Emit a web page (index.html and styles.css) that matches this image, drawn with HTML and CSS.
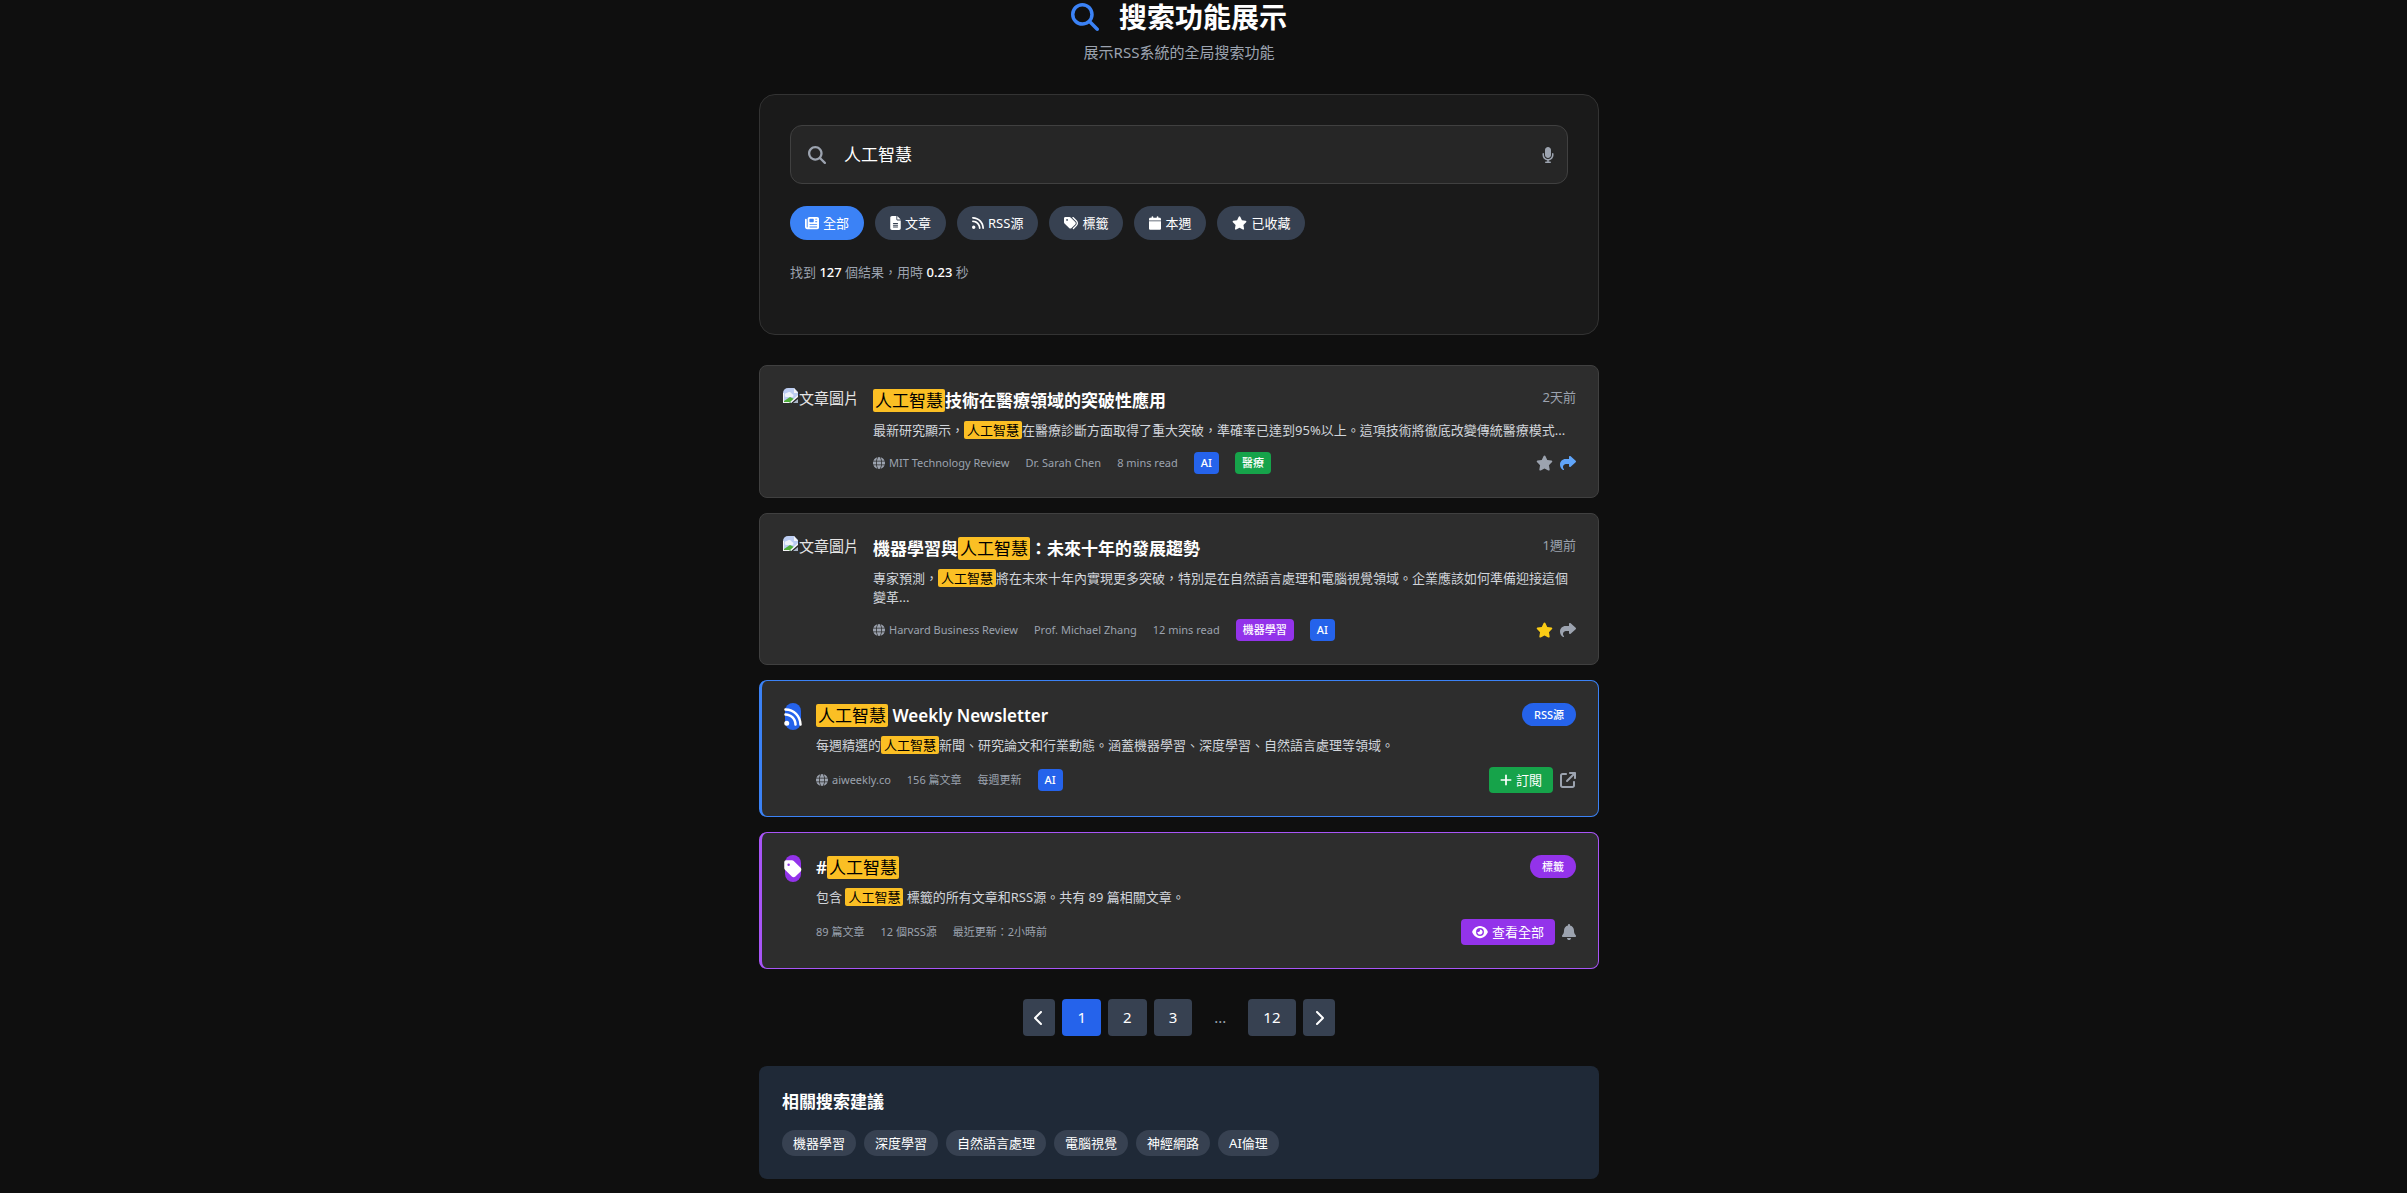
FILE: index.html
```html
<!DOCTYPE html>
<html lang="zh-Hant">
<head>
<meta charset="utf-8">
<meta name="viewport" content="width=device-width, initial-scale=1">
<title>搜索功能展示</title>
<link rel="stylesheet" href="styles.css">
</head>
<body>
<svg class="sprite" aria-hidden="true">
  <symbol id="i-search" viewBox="0 0 512 512"><path d="M416 208c0 45.900-14.900 88.300-40 122.700L502.600 457.400c12.500 12.500 12.500 32.800 0 45.300s-32.800 12.500-45.300 0L330.700 376c-34.400 25.200-76.800 40-122.700 40C93.100 416 0 322.900 0 208S93.100 0 208 0S416 93.100 416 208zM208 352a144 144 0 1 0 0-288 144 144 0 1 0 0 288z"/></symbol>
  <symbol id="i-mic" viewBox="0 0 384 512"><path d="M192 0C139 0 96 43 96 96V256c0 53 43 96 96 96s96-43 96-96V96c0-53-43-96-96-96zM64 216c0-13.300-10.700-24-24-24s-24 10.700-24 24v40c0 89.100 66.200 162.700 152 174.400V464H120c-13.300 0-24 10.700-24 24s10.700 24 24 24h72 72c13.300 0 24-10.700 24-24s-10.700-24-24-24H216V430.400c85.800-11.700 152-85.300 152-174.400V216c0-13.300-10.700-24-24-24s-24 10.700-24 24v40c0 70.700-57.300 128-128 128s-128-57.300-128-128V216z"/></symbol>
  <symbol id="i-news" viewBox="0 0 512 512"><path d="M96 96c0-35.300 28.700-64 64-64H448c35.300 0 64 28.700 64 64V416c0 35.300-28.700 64-64 64H80c-44.200 0-80-35.800-80-80V128c0-17.700 14.300-32 32-32s32 14.300 32 32V400c0 8.800 7.200 16 16 16s16-7.200 16-16V96zm64 24v80c0 13.300 10.700 24 24 24H296c13.300 0 24-10.700 24-24V120c0-13.300-10.700-24-24-24H184c-13.300 0-24 10.700-24 24zm208-8c0 8.800 7.200 16 16 16h48c8.800 0 16-7.200 16-16s-7.200-16-16-16H384c-8.800 0-16 7.200-16 16zm0 96c0 8.800 7.200 16 16 16h48c8.800 0 16-7.200 16-16s-7.200-16-16-16H384c-8.800 0-16 7.200-16 16zM160 304c0 8.800 7.200 16 16 16H432c8.800 0 16-7.200 16-16s-7.200-16-16-16H176c-8.800 0-16 7.200-16 16zm0 96c0 8.800 7.200 16 16 16H432c8.800 0 16-7.200 16-16s-7.200-16-16-16H176c-8.800 0-16 7.200-16 16z"/></symbol>
  <symbol id="i-file" viewBox="0 0 384 512"><path d="M64 0C28.700 0 0 28.700 0 64V448c0 35.300 28.700 64 64 64H320c35.300 0 64-28.700 64-64V160H256c-17.700 0-32-14.300-32-32V0H64zM256 0V128H384L256 0zM112 256H272c8.800 0 16 7.200 16 16s-7.200 16-16 16H112c-8.800 0-16-7.200-16-16s7.200-16 16-16zm0 64H272c8.800 0 16 7.200 16 16s-7.200 16-16 16H112c-8.800 0-16-7.200-16-16s7.200-16 16-16zm0 64H272c8.800 0 16 7.200 16 16s-7.200 16-16 16H112c-8.800 0-16-7.200-16-16s7.200-16 16-16z"/></symbol>
  <symbol id="i-rss" viewBox="0 0 448 512"><path d="M0 64C0 46.300 14.300 32 32 32c229.800 0 416 186.200 416 416c0 17.700-14.300 32-32 32s-32-14.300-32-32C384 253.600 226.400 96 32 96C14.300 96 0 81.700 0 64zM0 416a64 64 0 1 1 128 0A64 64 0 1 1 0 416zM32 160c159.100 0 288 128.900 288 288c0 17.700-14.300 32-32 32s-32-14.300-32-32c0-123.700-100.300-224-224-224c-17.700 0-32-14.300-32-32s14.300-32 32-32z"/></symbol>
  <symbol id="i-tags" viewBox="0 0 512 512"><path d="M345 39.100L472.800 168.400c52.400 53 52.400 138.200 0 191.200L360.800 472.900c-9.300 9.400-24.500 9.500-33.900 .2s-9.500-24.500-.2-33.900L438.600 325.900c33.900-34.300 33.900-89.400 0-123.700L310.900 72.900c-9.300-9.400-9.200-24.600 .2-33.900s24.600-9.200 33.900 .2zM0 229.500V80C0 53.500 21.500 32 48 32H197.500c17 0 33.300 6.700 45.300 18.700l168 168c25 25 25 65.500 0 90.500L277.300 442.700c-25 25-65.500 25-90.500 0l-168-168C6.700 262.700 0 246.500 0 229.500zM144 144a32 32 0 1 0-64 0 32 32 0 1 0 64 0z"/></symbol>
  <symbol id="i-tag" viewBox="0 0 448 512"><path d="M0 80V229.500c0 17 6.700 33.300 18.700 45.300l176 176c25 25 65.500 25 90.500 0L418.700 317.300c25-25 25-65.500 0-90.500l-176-176c-12-12-28.300-18.700-45.300-18.700H48C21.500 32 0 53.500 0 80zm112 32a32 32 0 1 1 0 64 32 32 0 1 1 0-64z"/></symbol>
  <symbol id="i-cal" viewBox="0 0 448 512"><path d="M96 32V64H48C21.500 64 0 85.500 0 112v48H448V112c0-26.500-21.500-48-48-48H352V32c0-17.700-14.300-32-32-32s-32 14.300-32 32V64H160V32c0-17.700-14.300-32-32-32S96 14.300 96 32zM448 192H0V464c0 26.500 21.500 48 48 48H400c26.500 0 48-21.500 48-48V192z"/></symbol>
  <symbol id="i-star" viewBox="0 0 576 512"><path d="M316.900 18C311.600 7 300.400 0 288.100 0s-23.400 7-28.800 18L195 150.300 51.400 171.500c-12 1.800-22 10.200-25.700 21.700s-.7 24.200 7.900 32.700L137.800 329 113.200 474.700c-2 12 3 24.200 12.900 31.300s23 8 33.800 2.300l128.300-68.500 128.300 68.500c10.800 5.700 23.900 4.900 33.800-2.300s14.900-19.300 12.900-31.300L438.500 329 542.700 225.900c8.600-8.500 11.700-21.200 7.900-32.700s-13.700-19.900-25.700-21.700L381.200 150.300 316.900 18z"/></symbol>
  <symbol id="i-share" viewBox="0 0 512 512"><path d="M307 34.800c-11.500 5.100-19 16.600-19 29.200v64H176C78.800 128 0 206.800 0 304C0 417.300 81.500 467.900 100.200 478.100c2.500 1.400 5.300 1.900 8.100 1.900c10.900 0 19.700-8.900 19.700-19.700c0-7.500-4.300-14.400-9.800-19.500C108.800 431.900 96 414.400 96 384c0-53 43-96 96-96h96v64c0 12.600 7.400 24.100 19 29.200s25 3 34.400-5.400l160-144c6.700-6.100 10.600-14.700 10.600-23.800s-3.800-17.700-10.600-23.800l-160-144c-9.400-8.500-22.900-10.600-34.400-5.400z"/></symbol>
  <symbol id="i-globe" viewBox="0 0 512 512"><path d="M352 256c0 22.200-1.200 43.600-3.300 64H163.300c-2.200-20.400-3.300-41.800-3.300-64s1.200-43.600 3.300-64H348.700c2.200 20.400 3.300 41.800 3.300 64zm28.800-64H503.900c5.300 20.500 8.100 41.900 8.100 64s-2.800 43.500-8.100 64H380.800c2.100-20.600 3.200-42 3.200-64s-1.100-43.400-3.200-64zm112.600-32H376.700c-10-63.900-29.800-117.400-55.300-151.600c78.300 20.700 142 77.500 171.900 151.600zm-149.100 0H167.700c6.100-36.400 15.500-68.600 27-94.700c10.500-23.600 22.200-40.700 33.500-51.500C239.400 3.200 248.700 0 256 0s16.600 3.200 27.800 13.800c11.300 10.800 23 27.900 33.500 51.500c11.600 26 20.900 58.200 27 94.700zm-209 0H18.600C48.600 85.900 112.200 29.100 190.600 8.400C165.100 42.600 145.300 96.100 135.300 160zM8.100 192H131.200c-2.100 20.600-3.200 42-3.200 64s1.100 43.400 3.200 64H8.100C2.800 299.500 0 278.100 0 256s2.800-43.500 8.100-64zM194.700 446.600c-11.600-26-20.900-58.200-27-94.600H344.300c-6.100 36.400-15.500 68.600-27 94.600c-10.500 23.600-22.200 40.700-33.500 51.500C272.600 508.800 263.300 512 256 512s-16.600-3.200-27.800-13.800c-11.300-10.800-23-27.900-33.500-51.500zM135.300 352c10 63.900 29.800 117.400 55.300 151.600C112.200 482.900 48.600 426.100 18.600 352H135.300zm358.100 0c-30 74.100-93.600 130.900-171.900 151.600c25.500-34.200 45.200-87.700 55.300-151.600H493.400z"/></symbol>
  <symbol id="i-plus" viewBox="0 0 448 512"><path d="M256 80c0-17.700-14.300-32-32-32s-32 14.300-32 32V224H48c-17.700 0-32 14.300-32 32s14.300 32 32 32H192V432c0 17.700 14.300 32 32 32s32-14.300 32-32V288H400c17.700 0 32-14.300 32-32s-14.300-32-32-32H256V80z"/></symbol>
  <symbol id="i-ext" viewBox="0 0 512 512"><path d="M320 0c-17.700 0-32 14.300-32 32s14.300 32 32 32h82.700L201.400 265.400c-12.500 12.500-12.500 32.800 0 45.300s32.800 12.500 45.300 0L448 109.300V192c0 17.700 14.300 32 32 32s32-14.300 32-32V32c0-17.700-14.300-32-32-32H320zM80 32C35.800 32 0 67.800 0 112V432c0 44.200 35.800 80 80 80H400c44.200 0 80-35.800 80-80V320c0-17.700-14.300-32-32-32s-32 14.300-32 32V432c0 8.800-7.200 16-16 16H80c-8.800 0-16-7.200-16-16V112c0-8.800 7.200-16 16-16H192c17.700 0 32-14.300 32-32s-14.300-32-32-32H80z"/></symbol>
  <symbol id="i-eye" viewBox="0 0 576 512"><path d="M288 32c-80.800 0-145.500 36.800-192.600 80.600C48.600 156 17.300 208 2.500 243.700c-3.300 7.900-3.300 16.700 0 24.600C17.300 304 48.600 356 95.400 399.400C142.500 443.200 207.200 480 288 480s145.500-36.800 192.600-80.600c46.800-43.500 78.100-95.400 93-131.100c3.300-7.900 3.300-16.700 0-24.600c-14.900-35.700-46.200-87.700-93-131.100C433.500 68.800 368.800 32 288 32zM144 256a144 144 0 1 1 288 0 144 144 0 1 1-288 0zm144-64c0 35.300-28.700 64-64 64c-7.100 0-13.900-1.200-20.300-3.300c-5.500-1.800-11.900 1.600-11.700 7.400c.3 6.900 1.300 13.800 3.200 20.700c13.700 51.200 66.400 81.600 117.600 67.900s81.600-66.400 67.900-117.600c-11.100-41.500-47.800-69.400-88.600-71.100c-5.800-.2-9.200 6.100-7.400 11.700c2.100 6.400 3.300 13.200 3.300 20.300z"/></symbol>
  <symbol id="i-bell" viewBox="0 0 448 512"><path d="M224 0c-17.700 0-32 14.300-32 32V51.200C119 66 64 130.600 64 208v18.800c0 47-17.300 92.400-48.500 127.600l-7.400 8.300c-8.400 9.400-10.400 22.900-5.300 34.400S19.400 416 32 416H416c12.600 0 24-7.400 29.200-18.900s3.100-25-5.300-34.400l-7.400-8.300C401.300 319.200 384 273.900 384 226.800V208c0-77.400-55-142-128-156.800V32c0-17.700-14.300-32-32-32zm45.300 493.300c12-12 18.700-28.300 18.700-45.300H224 160c0 17 6.700 33.300 18.700 45.300s28.300 18.700 45.300 18.700s33.300-6.700 45.300-18.700z"/></symbol>
  <symbol id="i-left" viewBox="0 0 320 512"><path d="M9.400 233.400c-12.500 12.500-12.500 32.800 0 45.300l192 192c12.500 12.500 32.800 12.500 45.300 0s12.500-32.800 0-45.300L77.300 256 246.600 86.600c12.500-12.500 12.500-32.800 0-45.300s-32.800-12.500-45.300 0l-192 192z"/></symbol>
  <symbol id="i-right" viewBox="0 0 320 512"><path d="M310.600 233.400c12.500 12.500 12.500 32.800 0 45.300l-192 192c-12.500 12.500-32.800 12.500-45.300 0s-12.500-32.800 0-45.300L242.700 256 73.400 86.600c-12.500-12.500-12.500-32.800 0-45.300s32.800-12.500 45.300 0l192 192z"/></symbol>
  <symbol id="i-broken" viewBox="0 0 16 16">
    <path fill="#bccdf2" d="M0 15V5a5 5 0 0 1 5-5h6l4 4v4L8 15z"/>
    <path fill="#eef2fb" d="M2 8a2 2 0 0 1 2-3a3 3 0 0 1 5 1a1 1 0 0 1 0 3H3a1 1 0 0 1-1-1z"/>
    <path fill="#4fae3a" d="M1 15v-2l6-4 4 2-4 4z"/>
    <path fill="#f4f5f7" d="M11 0l4 5h-4zM0 15h8v-1H1V5H0zM15 7v2l-7 6H6z"/>
    <path fill="#a9b6c9" d="M10 15l5-4v4z"/>
  </symbol>
</svg>

<div class="page">
  <header class="hero">
    <h1><svg class="hero-icon"><use href="#i-search"/></svg>搜索功能展示</h1>
    <p>展示RSS系統的全局搜索功能</p>
  </header>

  <section class="search-panel">
    <div class="search-box">
      <label for="q" aria-label="搜索"><svg class="ico-search"><use href="#i-search"/></svg></label>
      <input id="q" type="text" value="人工智慧">
      <button type="button" class="icon-btn" aria-label="語音"><svg class="w12"><use href="#i-mic"/></svg></button>
    </div>
    <div class="filters">
      <button type="button" class="filter active"><svg class="w14"><use href="#i-news"/></svg>全部</button>
      <button type="button" class="filter"><svg class="w11"><use href="#i-file"/></svg>文章</button>
      <button type="button" class="filter"><svg class="w12"><use href="#i-rss"/></svg>RSS源</button>
      <button type="button" class="filter"><svg class="w14"><use href="#i-tags"/></svg>標籤</button>
      <button type="button" class="filter"><svg class="w12"><use href="#i-cal"/></svg>本週</button>
      <button type="button" class="filter"><svg class="w15"><use href="#i-star"/></svg>已收藏</button>
    </div>
    <p class="stats">找到 <strong>127</strong> 個結果，用時 <strong>0.23</strong> 秒</p>
  </section>

  <main class="results">
    <article class="card">
      <div class="thumb"><svg><use href="#i-broken"/></svg><span>文章圖片</span></div>
      <div class="body">
        <div class="head"><h2><mark>人工智慧</mark>技術在醫療領域的突破性應用</h2><time>2天前</time></div>
        <p class="excerpt">最新研究顯示，<mark>人工智慧</mark>在醫療診斷方面取得了重大突破，準確率已達到95%以上。這項技術將徹底改變傳統醫療模式...</p>
        <div class="foot">
          <div class="meta"><span class="source"><svg><use href="#i-globe"/></svg>MIT Technology Review</span><span>Dr. Sarah Chen</span><span>8 mins read</span><span class="tag blue">AI</span><span class="tag green">醫療</span></div>
          <div class="actions"><button type="button" class="icon-btn" aria-label="收藏"><svg class="w17"><use href="#i-star"/></svg></button><button type="button" class="icon-btn sky" aria-label="分享"><svg class="w16"><use href="#i-share"/></svg></button></div>
        </div>
      </div>
    </article>

    <article class="card">
      <div class="thumb"><svg><use href="#i-broken"/></svg><span>文章圖片</span></div>
      <div class="body">
        <div class="head"><h2>機器學習與<mark>人工智慧</mark>：未來十年的發展趨勢</h2><time>1週前</time></div>
        <p class="excerpt">專家預測，<mark>人工智慧</mark>將在未來十年內實現更多突破，特別是在自然語言處理和電腦視覺領域。企業應該如何準備迎接這個變革...</p>
        <div class="foot">
          <div class="meta"><span class="source"><svg><use href="#i-globe"/></svg>Harvard Business Review</span><span>Prof. Michael Zhang</span><span>12 mins read</span><span class="tag purple">機器學習</span><span class="tag blue">AI</span></div>
          <div class="actions"><button type="button" class="icon-btn gold" aria-label="收藏"><svg class="w17"><use href="#i-star"/></svg></button><button type="button" class="icon-btn" aria-label="分享"><svg class="w16"><use href="#i-share"/></svg></button></div>
        </div>
      </div>
    </article>

    <article class="card feed">
      <div class="avatar blue"><svg><use href="#i-rss"/></svg></div>
      <div class="body">
        <div class="head"><h2><mark>人工智慧</mark> Weekly Newsletter</h2><span class="badge blue">RSS源</span></div>
        <p class="excerpt">每週精選的<mark>人工智慧</mark>新聞、研究論文和行業動態。涵蓋機器學習、深度學習、自然語言處理等領域。</p>
        <div class="foot">
          <div class="meta"><span class="source"><svg><use href="#i-globe"/></svg>aiweekly.co</span><span>156 篇文章</span><span>每週更新</span><span class="tag blue">AI</span></div>
          <div class="actions"><button type="button" class="btn green"><svg class="w12"><use href="#i-plus"/></svg>訂閱</button><button type="button" class="icon-btn" aria-label="開啟"><svg class="w16"><use href="#i-ext"/></svg></button></div>
        </div>
      </div>
    </article>

    <article class="card topic">
      <div class="avatar purple"><svg><use href="#i-tag"/></svg></div>
      <div class="body">
        <div class="head"><h2>#<mark>人工智慧</mark></h2><span class="badge purple">標籤</span></div>
        <p class="excerpt">包含 <mark>人工智慧</mark> 標籤的所有文章和RSS源。共有 89 篇相關文章。</p>
        <div class="foot">
          <div class="meta"><span>89 篇文章</span><span>12 個RSS源</span><span>最近更新：2小時前</span></div>
          <div class="actions"><button type="button" class="btn purple"><svg class="w16"><use href="#i-eye"/></svg>查看全部</button><button type="button" class="icon-btn" aria-label="通知"><svg class="w14"><use href="#i-bell"/></svg></button></div>
        </div>
      </div>
    </article>
  </main>

  <nav class="pager" aria-label="分頁">
    <button type="button" class="arrow" aria-label="上一頁"><svg><use href="#i-left"/></svg></button>
    <button type="button" class="current">1</button>
    <button type="button">2</button>
    <button type="button">3</button>
    <span>...</span>
    <button type="button">12</button>
    <button type="button" class="arrow" aria-label="下一頁"><svg><use href="#i-right"/></svg></button>
  </nav>

  <section class="related">
    <h2>相關搜索建議</h2>
    <div class="chips">
      <button type="button">機器學習</button>
      <button type="button">深度學習</button>
      <button type="button">自然語言處理</button>
      <button type="button">電腦視覺</button>
      <button type="button">神經網路</button>
      <button type="button">AI倫理</button>
    </div>
  </section>
</div>
</body>
</html>
```
FILE: styles.css
```css
* { box-sizing: border-box; }

body {
  margin: 0;
  padding-right: 49px;
  background: #0f0f0f;
  color: #e5e5e5;
  font: 15px/24px "Noto Sans", "Noto Sans CJK TC", sans-serif;
}

h1, h2, p { margin: 0; }
button, input { font: inherit; color: inherit; border: 0; padding: 0; margin: 0; background: none; }
button { cursor: pointer; }
svg { display: block; flex: none; fill: currentColor; height: 16px; }
.sprite { position: absolute; width: 0; height: 0; }

.w11 { width: 11px; }
.w12 { width: 12px; }
.w14 { width: 14px; }
.w15 { width: 15px; }
.w16 { width: 16px; }
.w17 { width: 17px; }

.blue { background: #2563eb; }
.green { background: #16a34a; }
.purple { background: #9333ea; }

.page { max-width: 840px; margin: 0 auto; padding-bottom: 14px; }

.hero { text-align: center; margin-bottom: 30px; }
.hero h1 {
  display: flex;
  justify-content: center;
  align-items: center;
  gap: 20px;
  color: #fff;
  font-size: 28px;
  line-height: 34px;
  font-weight: 600;
}
.hero-icon { width: 28px; height: 28px; color: #3b82f6; }
.hero p { margin-top: 6px; color: #9ca3af; }

.search-panel {
  padding: 30px 30px 50px;
  border: 1px solid #333;
  border-radius: 16px;
  background: #1a1a1a;
}
.search-box {
  display: flex;
  align-items: center;
  height: 59px;
  padding: 0 13px 0 17px;
  border: 1px solid #404040;
  border-radius: 12px;
  background: #262626;
  color: #9ca3af;
}
.ico-search { width: 18px; height: 18px; }
.search-box input {
  flex: 1;
  min-width: 0;
  margin-left: 18px;
  color: #fff;
  font-size: 17px;
  outline: 0;
}
.icon-btn { color: #9ca3af; }

.filters { display: flex; flex-wrap: wrap; gap: 11px; margin-top: 22px; }
.filter {
  display: flex;
  align-items: center;
  gap: 4px;
  height: 34px;
  padding: 0 15px;
  border-radius: 17px;
  background: #374151;
  color: #fff;
  font-size: 13px;
}
.filter svg { height: 14px; }
.filter.active { background: #3b82f6; }

.stats { margin-top: 20px; font-size: 13px; color: #9ca3af; }
.stats strong { color: #fff; font-weight: 500; }

.results { display: grid; gap: 15px; margin-top: 30px; }
.card {
  display: flex;
  align-items: flex-start;
  gap: 15px;
  padding: 22px 22px 23px 23px;
  border: 1px solid #404040;
  border-radius: 8px;
  background: #2d2d2d;
}
.feed { border-color: #3b82f6; border-left-width: 3px; }
.topic { border-color: #a855f7; border-left-width: 3px; }

.thumb { display: flex; width: 75px; height: 60px; white-space: nowrap; line-height: 20px; }
.thumb svg { width: 16px; height: 16px; }
.avatar {
  display: flex;
  align-items: center;
  justify-content: center;
  width: 16px;
  height: 27px;
  border-radius: 8px;
  color: #fff;
}
.avatar svg { width: 18px; height: 20px; }

.body { flex: 1; min-width: 0; }
.head { display: flex; justify-content: space-between; align-items: flex-start; }
.head h2, .related h2 { color: #fff; font-size: 17px; line-height: 26px; font-weight: 600; }
.head time { color: #9ca3af; font-size: 13px; line-height: 19px; }
mark { padding: 0 2px; border-radius: 2px; background: #fbbf24; color: #000; font-weight: 400; }
.badge {
  padding: 0 12px;
  border-radius: 12px;
  color: #fff;
  font-size: 11px;
  line-height: 23px;
  font-weight: 500;
}
.excerpt { margin-top: 7px; color: #d1d5db; font-size: 13px; line-height: 19px; }
.excerpt mark { padding: 0 3px; }

.foot { display: flex; justify-content: space-between; align-items: center; margin-top: 12px; min-height: 22px; }
.meta { display: flex; align-items: center; gap: 16px; color: #9ca3af; font-size: 11px; line-height: 22px; }
.source { display: flex; align-items: center; gap: 4px; }
.source svg { width: 12px; height: 12px; }
.tag { padding: 0 7px; border-radius: 4px; color: #fff; font-weight: 500; }
.actions { display: flex; align-items: center; gap: 7px; }
.sky { color: #60a5fa; }
.gold { color: #facc15; }
.btn {
  display: flex;
  align-items: center;
  gap: 4px;
  height: 26px;
  padding: 0 11px;
  border-radius: 4px;
  color: #fff;
  font-size: 13px;
}
.btn svg { height: 14px; }

.pager { display: flex; justify-content: center; gap: 7px; margin-top: 30px; line-height: 37px; }
.pager button { padding: 0 15px; border-radius: 4px; background: #374151; color: #fff; }
.pager .arrow { padding: 0 11px; }
.pager .arrow svg { width: 10px; height: 16px; }
.pager .current { background: #2563eb; }
.pager span { padding: 0 15px; color: #9ca3af; }

.related { margin-top: 30px; padding: 23px; border-radius: 8px; background: #1f2937; }
.chips { display: flex; flex-wrap: wrap; gap: 8px; margin-top: 15px; }
.chips button {
  height: 26px;
  padding: 0 11px;
  border-radius: 13px;
  background: #374151;
  color: #fff;
  font-size: 13px;
}
```
